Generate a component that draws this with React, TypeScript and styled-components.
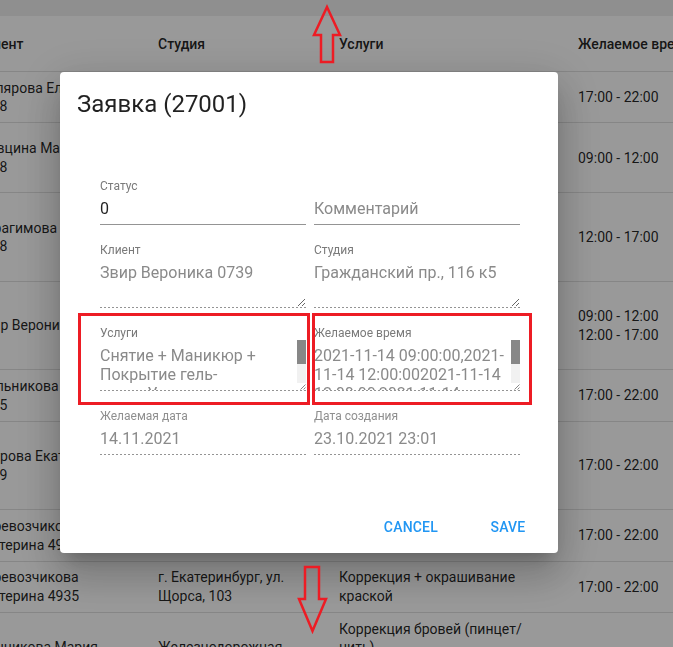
import { Fragment } from "react";
import styled, { createGlobalStyle, css } from "styled-components";

const GlobalStyle = createGlobalStyle`
  html, body {
    margin: 0;
    padding: 0;
    overflow: hidden;
    background: #ffffff;
    font-family: Roboto, "Liberation Sans", Arial, sans-serif;
  }
  * {
    box-sizing: border-box;
  }
`;

type Row = {
  client: string[];
  studio: string[];
  services: string[];
  time: string[];
};

const rows: Row[] = [
  {
    client: ["Шулярова Елена", "0558"],
    studio: ["Гражданский пр.,", "116 к5"],
    services: ["Маникюр"],
    time: ["17:00 - 22:00"],
  },
  {
    client: ["Шевцина Мария", "0448"],
    studio: ["Гражданский пр.,", "116 к5"],
    services: ["Снятие + Маникюр +", "Покрытие гель-", "лаком"],
    time: ["09:00 - 12:00"],
  },
  {
    client: ["Ибрагимова Зарина", "0118"],
    studio: ["г. Екатеринбург, ул.", "Щорса, 103"],
    services: ["Снятие + Маникюр +", "Покрытие гель-лаком", "Педикюр + покрытие", "гель-лаком"],
    time: ["12:00 - 17:00"],
  },
  {
    client: ["Звир Вероника 0739"],
    studio: ["Гражданский пр.,", "116 к5"],
    services: ["Снятие + Маникюр +", "Покрытие гель-", "лакомУдлинение рук", "Педикюр"],
    time: ["09:00 - 12:00", "12:00 - 17:00"],
  },
  {
    client: ["Мельникова Анна", "0665"],
    studio: ["Гражданский пр.,", "116 к5"],
    services: ["Коррекция + окрашивание", "краской"],
    time: ["17:00 - 22:00"],
  },
  {
    client: ["Петрова Екатерина", "0349"],
    studio: ["г. Екатеринбург, ул.", "Щорса, 103"],
    services: ["Снятие + Маникюр +", "Покрытие гель-лаком", "Педикюр + покрытие", "гель-лаком"],
    time: ["17:00 - 22:00"],
  },
  {
    client: ["Перевозчикова", "Екатерина 4935"],
    studio: ["г. Екатеринбург, ул.", "Щорса, 103"],
    services: ["Коррекция + окрашивание", "краской"],
    time: ["17:00 - 22:00"],
  },
  {
    client: ["Перевозчикова", "Екатерина 4935"],
    studio: ["г. Екатеринбург, ул.", "Щорса, 103"],
    services: ["Коррекция + окрашивание", "краской"],
    time: ["17:00 - 22:00"],
  },
  {
    client: ["Лушникова Мария"],
    studio: ["Железнодорожная"],
    services: ["Коррекция бровей (пинцет/", "нить)", "+ окрашивание"],
    time: [],
  },
];

/* ---------- background table ---------- */

const Page = styled.div`
  display: flex;
  flex-direction: column;
  margin-left: -40px;
  width: 802px;
`;

const TopStrip = styled.div`
  height: 16px;
  background: #eeeeee;
`;

const TableGrid = styled.div`
  display: grid;
  grid-template-columns: 182px 181px 239px 200px;
  font-size: 14px;
  color: rgba(0, 0, 0, 0.87);
`;

const HeadCell = styled.div`
  height: 56px;
  display: flex;
  align-items: center;
  padding: 0 16px;
  font-weight: 500;
  white-space: nowrap;
  border-bottom: 1px solid rgb(224, 224, 224);
`;

const Cell = styled.div`
  display: flex;
  flex-direction: column;
  justify-content: center;
  padding: 6.6px 16px;
  line-height: 18.6px;
  white-space: nowrap;
  border-bottom: 1px solid rgb(224, 224, 224);
`;

/* ---------- dialog ---------- */

const Backdrop = styled.div`
  position: fixed;
  inset: 0;
  background: rgba(0, 0, 0, 0.4);
  display: flex;
  align-items: flex-start;
  padding: 72px 0 0 60px;
`;

const Dialog = styled.div`
  width: 498px;
  background: #ffffff;
  border-radius: 4px;
  box-shadow: 0px 11px 15px -7px rgba(0, 0, 0, 0.2),
    0px 24px 38px 3px rgba(0, 0, 0, 0.14), 0px 9px 46px 8px rgba(0, 0, 0, 0.12);
  display: flex;
  flex-direction: column;
`;

const Title = styled.h2`
  margin: 0;
  padding: 16px 17px;
  font-size: 24px;
  line-height: 32px;
  font-weight: 400;
  color: rgba(0, 0, 0, 0.87);
`;

const Content = styled.div`
  display: grid;
  grid-template-columns: 1fr 1fr;
  column-gap: 8px;
  row-gap: 19px;
  padding: 44px 38px 46px 40px;
`;

const Field = styled.div<{ $mark?: [number, number] }>`
  position: relative;
  display: flex;
  flex-direction: column;
  ${({ $mark }) =>
    $mark &&
    css`
      &::after {
        content: "";
        position: absolute;
        top: -14px;
        bottom: -14px;
        left: ${-$mark[0]}px;
        right: ${-$mark[1]}px;
        border: 3px solid #ed1c24;
        pointer-events: none;
      }
    `}
`;

const Label = styled.label<{ $muted?: boolean }>`
  display: block;
  height: 13px;
  font-size: 12px;
  line-height: 13px;
  color: ${({ $muted }) => ($muted ? "#8f8f8f" : "#7a7a7a")};
  white-space: nowrap;
`;

const InputRoot = styled.div<{ $dotted?: boolean }>`
  display: flex;
  padding-bottom: 1px;
  ${({ $dotted }) =>
    $dotted
      ? css`
          background-image: linear-gradient(
            to right,
            rgba(0, 0, 0, 0.42) 50%,
            transparent 0%
          );
          background-size: 4px 1px;
          background-repeat: repeat-x;
          background-position: left bottom;
        `
      : css`
          border-bottom: 1px solid rgba(0, 0, 0, 0.42);
          padding-bottom: 0;
        `}
`;

const textStyle = css<{ $muted?: boolean }>`
  flex: 1;
  min-width: 0;
  width: 100%;
  margin: 0;
  border: none;
  outline: none;
  background: transparent;
  font-family: Roboto, "Liberation Sans", Arial, sans-serif;
  font-size: 16px;
  line-height: 19px;
  padding: 6px 0;
  color: ${({ $muted }) => ($muted ? "#8a8a8a" : "rgba(0, 0, 0, 0.87)")};
`;

const TextInput = styled.input<{ $muted?: boolean }>`
  ${textStyle}
  height: 31px;
  &::placeholder {
    color: #8a8a8a;
    opacity: 1;
  }
`;

const TextArea = styled.textarea<{ $muted?: boolean; $fixed?: boolean }>`
  ${textStyle}
  display: block;
  height: 50px;
  resize: ${({ $fixed }) => ($fixed ? "none" : "both")};
  overflow: hidden;
`;

const ScrollBar = styled.div`
  width: 9px;
  display: flex;
  flex-direction: column;
`;

const Track = styled.div`
  flex: 1;
  background: #f1f1f1;
`;

const Thumb = styled.div<{ $size: number }>`
  height: ${({ $size }) => $size}px;
  background: #878787;
`;

const Corner = styled.div`
  height: 7px;
  display: flex;
  justify-content: flex-end;
  align-items: flex-end;
  background: #ffffff;
`;

const Actions = styled.div`
  display: flex;
  justify-content: flex-end;
  align-items: center;
  gap: 30px;
  padding: 8px 18px 8px 8px;
`;

const Button = styled.button`
  min-width: 64px;
  height: 36px;
  padding: 6px 8px;
  border: none;
  background: transparent;
  border-radius: 4px;
  font-family: Roboto, "Liberation Sans", Arial, sans-serif;
  font-size: 14px;
  font-weight: 500;
  letter-spacing: 0.2px;
  text-transform: uppercase;
  color: #2196f3;
  cursor: pointer;
`;

/* ---------- annotations ---------- */

const Annotations = styled.svg`
  position: fixed;
  inset: 0;
  width: 673px;
  height: 647px;
  pointer-events: none;
`;

function ScrollArea({ value }: { value: string }) {
  return (
    <InputRoot $dotted>
      <TextArea $muted $fixed readOnly rows={2} value={value} />
      <ScrollBar>
        <Track>
          <Thumb $size={24} />
        </Track>
        <Corner>
          <svg width="7" height="7" viewBox="0 0 7 7">
            <path d="M6.5 1.5 L1.5 6.5 M6.5 4.5 L4.5 6.5" stroke="#7a7a7a" strokeWidth="0.9" />
          </svg>
        </Corner>
      </ScrollBar>
    </InputRoot>
  );
}

function App() {
  return (
    <>
      <GlobalStyle />
      <Page>
        <TopStrip />
        <TableGrid>
          <HeadCell>Клиент</HeadCell>
          <HeadCell>Студия</HeadCell>
          <HeadCell>Услуги</HeadCell>
          <HeadCell>Желаемое время</HeadCell>
          {rows.map((r, i) => (
            <Fragment key={i}>
              <Cell>
                {r.client.map((t) => (
                  <span key={t}>{t}</span>
                ))}
              </Cell>
              <Cell>
                {r.studio.map((t) => (
                  <span key={t}>{t}</span>
                ))}
              </Cell>
              <Cell>
                {r.services.map((t) => (
                  <span key={t}>{t}</span>
                ))}
              </Cell>
              <Cell>
                {r.time.map((t) => (
                  <span key={t}>{t}</span>
                ))}
              </Cell>
            </Fragment>
          ))}
        </TableGrid>
      </Page>

      <Backdrop>
        <Dialog>
          <Title>Заявка (27001)</Title>
          <Content>
            <Field>
              <Label>Статус</Label>
              <InputRoot>
                <TextInput readOnly value="0" />
              </InputRoot>
            </Field>
            <Field>
              <Label />
              <InputRoot>
                <TextInput readOnly placeholder="Комментарий" />
              </InputRoot>
            </Field>

            <Field>
              <Label>Клиент</Label>
              <InputRoot $dotted>
                <TextArea $muted readOnly rows={2} value="Звир Вероника 0739" />
              </InputRoot>
            </Field>
            <Field>
              <Label>Студия</Label>
              <InputRoot $dotted>
                <TextArea $muted readOnly rows={2} value="Гражданский пр., 116 к5" />
              </InputRoot>
            </Field>

            <Field $mark={[22, 4]}>
              <Label>Услуги</Label>
              <ScrollArea value="Снятие + Маникюр + Покрытие гель-лакомУдлинение рук Педикюр" />
            </Field>
            <Field $mark={[2, 12]}>
              <Label>Желаемое время</Label>
              <ScrollArea value="2021-11-14 09:00:00,2021-11-14 12:00:002021-11-14 12:00:00,2021-11-14 17:00:00" />
            </Field>

            <Field>
              <Label $muted>Желаемая дата</Label>
              <InputRoot $dotted>
                <TextInput $muted readOnly value="14.11.2021" />
              </InputRoot>
            </Field>
            <Field>
              <Label $muted>Дата создания</Label>
              <InputRoot $dotted>
                <TextInput $muted readOnly value="23.10.2021 23:01" />
              </InputRoot>
            </Field>
          </Content>
          <Actions>
            <Button>Cancel</Button>
            <Button>Save</Button>
          </Actions>
        </Dialog>
      </Backdrop>

      <Annotations viewBox="0 0 673 647">
        <polygon
          points="327,7 340,35 333,35 333,62 321,62 321,35 314,35"
          fill="none"
          stroke="#ed1c24"
          strokeWidth="2.5"
        />
        <polygon
          points="305,567 319,567 319,599 326,599 312.5,631 299,599 305,599"
          fill="none"
          stroke="#ed1c24"
          strokeWidth="2.5"
        />
      </Annotations>
    </>
  );
}

export default App;
